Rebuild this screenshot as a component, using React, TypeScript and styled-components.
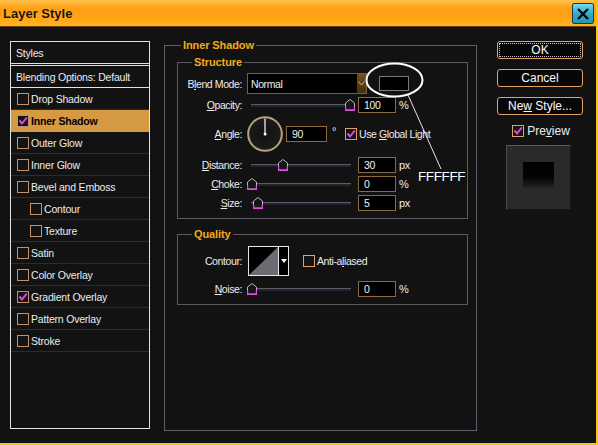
import React from "react";
import styled, { createGlobalStyle } from "styled-components";

const GlobalStyle = createGlobalStyle`
  html, body { margin: 0; padding: 0; background: #121212; }
  body { font-family: "Liberation Sans", Arial, sans-serif; }
  * { box-sizing: border-box; }
`;

const Window = styled.div`
  position: relative;
  width: 598px;
  height: 445px;
  background: #121212;
  border-right: 2px solid #f2c418;
  border-bottom: 2px solid #f2c418;
  display: flex;
  flex-direction: column;
  font-family: "Liberation Sans", Arial, sans-serif;
  font-size: 10.5px;
  color: #ececec;
  overflow: hidden;
`;

const TitleBar = styled.div`
  height: 27px;
  flex-shrink: 0;
  display: flex;
  align-items: center;
  justify-content: space-between;
  padding: 0 2px 0 3px;
  background: linear-gradient(#ffc24a 0%, #ff9f12 35%, #ffa515 70%, #ffb424 100%);
  border-bottom: 1px solid #6a3c00;
`;

const Title = styled.span`
  font-weight: bold;
  font-size: 13px;
  color: #1c1200;
  text-shadow: 0 0 1px rgba(255, 220, 150, 0.6);
`;

const CloseButton = styled.div`
  width: 22px;
  height: 21px;
  margin-top: 1px;
  border: 1px solid #163c48;
  border-radius: 2px;
  background: linear-gradient(#6cdcf2, #32a8c8 55%, #2a96b4);
  display: flex;
  align-items: center;
  justify-content: center;
`;

const Body = styled.div`
  flex: 1;
  display: flex;
  align-items: flex-start;
  padding: 11px 0 0 10px;
`;

const StyleList = styled.div`
  width: 140px;
  height: 388px;
  margin-top: 3px;
  border: 1px solid #e2e2e2;
  display: flex;
  flex-direction: column;
  letter-spacing: -0.2px;
`;

const ListHeader = styled.div<{ $double?: boolean }>`
  height: ${(p) => (p.$double ? 24 : 22)}px;
  display: flex;
  align-items: center;
  padding-left: 5px;
  border-bottom: ${(p) => (p.$double ? "3px double #e2e2e2" : "1px solid #e2e2e2")};
`;

const StyleRow = styled.div<{ $active?: boolean; $indent?: boolean }>`
  height: 22px;
  display: flex;
  align-items: center;
  gap: 2px;
  padding-left: ${(p) => (p.$indent ? 19 : 6)}px;
  border-bottom: 1px solid ${(p) => (p.$active ? "#d59a42" : "#2c2c2e")};
  background: ${(p) => (p.$active ? "#d59a42" : "transparent")};
  color: ${(p) => (p.$active ? "#000" : "#ececec")};
  font-weight: ${(p) => (p.$active ? "bold" : "normal")};
`;

const Box = styled.span<{ $on?: boolean; $bright?: boolean }>`
  width: 12px;
  height: 12px;
  flex-shrink: 0;
  border: 1px solid ${(p) => (p.$bright ? "#e4a06c" : "#c4926a")};
  background: #141414;
  display: inline-flex;
  align-items: center;
  justify-content: center;
`;

const Check = ({ on, bright }: { on?: boolean; bright?: boolean }) => (
  <Box $on={on} $bright={bright}>
    {on && (
      <svg width="10" height="10" viewBox="0 0 10 10">
        <path d="M1.5 4.5 L4 7.5 L8.8 1.5" fill="none" stroke="#e24ae2" strokeWidth="2" />
      </svg>
    )}
  </Box>
);

const Main = styled.div`
  width: 313px;
  margin-left: 14px;
  letter-spacing: -0.4px;
`;

const Group = styled.fieldset<{ $outer?: boolean }>`
  margin: ${(p) => (p.$outer ? "0" : "0 0 8px 0")};
  padding: ${(p) => (p.$outer ? "3px 8px 0 12px" : "4px 0 7px 0")};
  border: 1px solid ${(p) => (p.$outer ? "#5e5e68" : "#5a5a62")};
  min-width: 0;
  height: ${(p) => (p.$outer ? "393px" : "auto")};
`;

const Legend = styled.legend<{ $inner?: boolean }>`
  margin-left: ${(p) => (p.$inner ? 14 : 4)}px;
  padding: 0 2px;
  font-weight: bold;
  font-size: 11px;
  line-height: 14px;
  letter-spacing: -0.1px;
  color: #f4aa1a;
`;

const Row = styled.div<{ $h?: number; $mt?: number }>`
  display: flex;
  align-items: center;
  height: ${(p) => p.$h ?? 16}px;
  margin-top: ${(p) => p.$mt ?? 3}px;
  &:first-of-type { margin-top: 0; }
`;

const Label = styled.span`
  width: 64px;
  flex-shrink: 0;
  text-align: right;
  margin-right: 5px;
`;

const U = styled.span`
  text-decoration: underline;
`;

const Select = styled.div`
  width: 120px;
  height: 21px;
  background: #000;
  border: 1px solid #7e5e36;
  display: flex;
  align-items: center;
  justify-content: space-between;
  padding-left: 3px;
`;

const SelectButton = styled.span`
  width: 9px;
  height: 19px;
  background: linear-gradient(#6e5220, #43300c);
  display: flex;
  align-items: center;
  justify-content: center;
`;

const Swatch = styled.span`
  width: 30px;
  height: 15px;
  margin-left: 12px;
  background: #000;
  border: 1px solid #7a7a7a;
`;

const SliderWrap = styled.div`
  position: relative;
  width: 106px;
  height: 16px;
  flex-shrink: 0;
`;

const Track = styled.div`
  position: absolute;
  left: 4px;
  right: 2px;
  top: 7px;
  height: 3px;
  background: #24242c;
  border-top: 1px solid #5c5c6a;
`;

const Thumb = styled.svg`
  position: absolute;
  top: 2px;
`;

const Slider = ({ pos }: { pos: number }) => (
  <SliderWrap>
    <Track />
    <Thumb width="10" height="12" viewBox="0 0 10 12" style={{ left: `${Math.round(pos * 98)}px` }}>
      <path d="M5 0.5 L9.5 4 L9.5 11.2 L0.5 11.2 L0.5 4 Z" fill="#161616" stroke="#b8b8c0" strokeWidth="1" />
      <path d="M0.5 7 L0.5 11.2 L9.5 11.2 L9.5 7" fill="none" stroke="#e050e0" strokeWidth="1.4" />
    </Thumb>
  </SliderWrap>
);

const Input = styled.div<{ $w?: number }>`
  width: ${(p) => p.$w ?? 38}px;
  height: 16px;
  margin-left: 5px;
  background: #000;
  border: 1px solid #8a6a3e;
  padding-left: 5px;
  display: flex;
  align-items: center;
  color: #f2f2f2;
`;

const Unit = styled.span`
  margin-left: 3px;
  font-size: 11px;
`;

const Dial = styled.svg`
  flex-shrink: 0;
`;

const CheckLabel = styled.span<{ $ml?: number }>`
  display: inline-flex;
  align-items: center;
  gap: 2px;
  margin-left: ${(p) => p.$ml ?? 0}px;
  white-space: nowrap;
`;

const ContourPicker = styled.div`
  width: 41px;
  height: 30px;
  margin-left: 1px;
  border: 1px solid #e8e8e8;
  display: flex;
  background: #000;
`;

const ContourDrop = styled.span`
  width: 10px;
  border-left: 1px solid #e8e8e8;
  display: flex;
  align-items: center;
  justify-content: center;
`;

const Side = styled.div`
  width: 86px;
  margin-left: 20px;
  margin-top: 3px;
  display: flex;
  flex-direction: column;
  align-items: stretch;
`;

const Button = styled.div<{ $focus?: boolean }>`
  height: 18px;
  margin-bottom: 10px;
  background: #070707;
  border: 1px solid #e2a264;
  border-radius: 3px;
  color: #fafafa;
  font-size: 12px;
  display: flex;
  align-items: center;
  justify-content: center;
  outline: ${(p) => (p.$focus ? "1px dotted #c8c8d8" : "none")};
  outline-offset: -3px;
`;

const PreviewToggle = styled.div`
  display: flex;
  justify-content: center;
  align-items: center;
  gap: 3px;
  height: 12px;
  font-size: 12px;
  margin-left: 2px;
`;

const PreviewBox = styled.div`
  width: 65px;
  height: 65px;
  margin: 8px 0 0 9px;
  background: #2a2a2a;
  border-top: 1px solid #5a5a5a;
  border-left: 1px solid #4c4c4c;
  border-right: 1px solid #1a1a1a;
  border-bottom: 1px solid #161616;
  display: flex;
  justify-content: center;
  padding-top: 16px;
`;

const PreviewInner = styled.div`
  width: 31px;
  height: 27px;
  background: linear-gradient(#000 0%, #030303 55%, #1a1a1a 85%, #2a2a2a 100%);
`;

const Overlay = styled.svg`
  position: absolute;
  left: 0;
  top: 0;
  pointer-events: none;
`;

const Note = styled.span`
  position: absolute;
  left: 418px;
  top: 169px;
  font-size: 13.5px;
  letter-spacing: -0.4px;
  line-height: 16px;
  color: #fff;
`;

const styleItems: { name: string; on?: boolean; active?: boolean; indent?: boolean }[] = [
  { name: "Drop Shadow" },
  { name: "Inner Shadow", on: true, active: true },
  { name: "Outer Glow" },
  { name: "Inner Glow" },
  { name: "Bevel and Emboss" },
  { name: "Contour", indent: true },
  { name: "Texture", indent: true },
  { name: "Satin" },
  { name: "Color Overlay" },
  { name: "Gradient Overlay", on: true },
  { name: "Pattern Overlay" },
  { name: "Stroke" },
];

export default function App() {
  return (
    <>
      <GlobalStyle />
      <Window>
        <TitleBar>
          <Title>Layer Style</Title>
          <CloseButton>
            <svg width="14" height="14" viewBox="0 0 14 14">
              <path d="M2 2 L12 12 M12 2 L2 12" stroke="#050505" strokeWidth="2.4" />
            </svg>
          </CloseButton>
        </TitleBar>
        <Body>
          <StyleList>
            <ListHeader $double>Styles</ListHeader>
            <ListHeader>Blending Options: Default</ListHeader>
            {styleItems.map((s) => (
              <StyleRow key={s.name} $active={s.active} $indent={s.indent}>
                <Check on={s.on} />
                <span>{s.name}</span>
              </StyleRow>
            ))}
          </StyleList>

          <Main>
            <Group $outer>
              <Legend>Inner Shadow</Legend>
              <Group>
                <Legend $inner>Structure</Legend>
                <Row $h={21}>
                  <Label>
                    B<U>l</U>end Mode:
                  </Label>
                  <Select>
                    <span>Normal</span>
                    <SelectButton>
                      <svg width="7" height="5" viewBox="0 0 7 5">
                        <path d="M0.5 0.5 L3.5 4 L6.5 0.5" fill="none" stroke="#c8b080" strokeWidth="1" />
                      </svg>
                    </SelectButton>
                  </Select>
                  <Swatch />
                </Row>
                <Row>
                  <Label>
                    <U>O</U>pacity:
                  </Label>
                  <Slider pos={1} />
                  <Input>100</Input>
                  <Unit>%</Unit>
                </Row>
                <Row $h={36}>
                  <Label>
                    <U>A</U>ngle:
                  </Label>
                  <Dial width="36" height="36" viewBox="0 0 36 36">
                    <defs>
                      <radialGradient id="dialbg" cx="50%" cy="50%" r="50%">
                        <stop offset="0%" stopColor="#101010" />
                        <stop offset="100%" stopColor="#1c1c1c" />
                      </radialGradient>
                    </defs>
                    <circle cx="18" cy="18" r="16.8" fill="url(#dialbg)" stroke="#b4a47a" strokeWidth="2" />
                    <line x1="18" y1="18" x2="18" y2="2.5" stroke="#ffffff" strokeWidth="1.2" />
                    <rect x="16.8" y="16.8" width="2.6" height="2.6" fill="#ffffff" />
                  </Dial>
                  <Input $w={41} style={{ marginLeft: 3 }}>
                    90
                  </Input>
                  <Unit style={{ marginLeft: 5, alignSelf: "flex-start", marginTop: 9 }}>°</Unit>
                  <CheckLabel $ml={9}>
                    <Check on bright />
                    <span>
                      Use <U>G</U>lobal Light
                    </span>
                  </CheckLabel>
                </Row>
                <Row $mt={5}>
                  <Label>
                    <U>D</U>istance:
                  </Label>
                  <Slider pos={0.32} />
                  <Input>30</Input>
                  <Unit>px</Unit>
                </Row>
                <Row>
                  <Label>
                    <U>C</U>hoke:
                  </Label>
                  <Slider pos={0} />
                  <Input>0</Input>
                  <Unit>%</Unit>
                </Row>
                <Row>
                  <Label>
                    <U>S</U>ize:
                  </Label>
                  <Slider pos={0.06} />
                  <Input>5</Input>
                  <Unit>px</Unit>
                </Row>
              </Group>

              <Group>
                <Legend $inner>Quality</Legend>
                <Row $h={30} style={{ marginTop: 1 }}>
                  <Label>Contour:</Label>
                  <ContourPicker>
                    <svg width="29" height="28" viewBox="0 0 29 28">
                      <polygon points="0,28 29,0 29,28" fill="#6c6c74" />
                    </svg>
                    <ContourDrop>
                      <svg width="6" height="4" viewBox="0 0 6 4">
                        <polygon points="0,0 6,0 3,4" fill="#ffffff" />
                      </svg>
                    </ContourDrop>
                  </ContourPicker>
                  <CheckLabel $ml={14}>
                    <Check bright />
                    <span>
                      Anti-a<U>l</U>iased
                    </span>
                  </CheckLabel>
                </Row>
                <Row $mt={5}>
                  <Label>
                    <U>N</U>oise:
                  </Label>
                  <Slider pos={0} />
                  <Input>0</Input>
                  <Unit>%</Unit>
                </Row>
              </Group>
            </Group>
          </Main>

          <Side>
            <Button $focus>OK</Button>
            <Button>Cancel</Button>
            <Button>
              Ne<U>w</U>&nbsp;Style...
            </Button>
            <PreviewToggle>
              <Check on bright />
              <span>
                Pre<U>v</U>iew
              </span>
            </PreviewToggle>
            <PreviewBox>
              <PreviewInner />
            </PreviewBox>
          </Side>
        </Body>

        <Overlay width="598" height="445" viewBox="0 0 598 445">
          <ellipse cx="394.5" cy="80" rx="28" ry="16.5" fill="none" stroke="#ffffff" strokeWidth="2" />
          <line x1="408" y1="95" x2="441" y2="169" stroke="#e8e8e8" strokeWidth="1" />
        </Overlay>
        <Note>FFFFFF</Note>
      </Window>
    </>
  );
}
